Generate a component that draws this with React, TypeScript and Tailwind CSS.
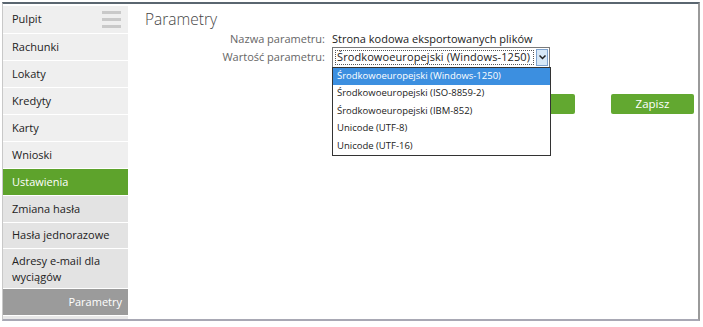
import React from "react";

const items = ["Rachunki", "Lokaty", "Kredyty", "Karty", "Wnioski"];

export default function App() {
  return (
    <div className="w-[703px] h-[327px] bg-white" style={{ fontFamily: '"Open Sans", "Noto Sans", sans-serif' }}>
      <div className="ml-[2px] mt-[2px] w-[698px] h-[319px] border-t-[2px] border-t-[#5a6670] border-l border-l-[#c8c8c8] border-r-[2px] border-r-[#9a9a9a] border-b-[2px] border-b-[#a8a8b4] flex">
        <div className="w-[125px] flex flex-col bg-white gap-px pt-[2px]">
          <div className="h-[27px] bg-[#efefef] flex items-center justify-between pl-[9px] pr-[7px] text-[11px] text-[#222]">
            <span>Pulpit</span>
            <div className="flex flex-col gap-[4px] w-[19px]">
              <div className="h-[3px] bg-[#c9c9c9]" />
              <div className="h-[3px] bg-[#c9c9c9]" />
              <div className="h-[3px] bg-[#c9c9c9]" />
            </div>
          </div>
          {items.map((t) => (
            <div key={t} className="h-[26px] bg-[#efefef] flex items-center pl-[9px] text-[11px] text-[#222]">{t}</div>
          ))}
          <div className="h-[26px] bg-[#5ea32c] flex items-center pl-[9px] text-[11px] text-white">Ustawienia</div>
          <div className="h-[26px] bg-[#e3e3e3] flex items-center pl-[9px] text-[11px] text-[#222]">Zmiana hasła</div>
          <div className="h-[25px] bg-[#e3e3e3] flex items-center pl-[9px] text-[11px] text-[#222]">Hasła jednorazowe</div>
          <div className="h-[39px] bg-[#e3e3e3] flex items-center pl-[9px] text-[11px] leading-[16px] text-[#222]">Adresy e-mail dla<br />wyciągów</div>
          <div className="h-[26px] bg-[#9b9b9b] flex items-center justify-end pr-[6px] text-[11px] text-white">Parametry</div>
          <div className="flex-1 bg-[#e8e8e8]" />
        </div>
        <div className="flex-1 relative pl-[15px]">
          <div className="text-[15.5px] font-light text-[#444] leading-[20px] mt-[5px] ml-[2px]">Parametry</div>
          <div className="flex items-center mt-[2px] text-[11px] h-[16px]">
            <div className="w-[189px] text-right pr-[7px] text-[#666]">Nazwa parametru:</div>
            <div className="text-[#222]">Strona kodowa eksportowanych plików</div>
          </div>
          <div className="flex items-start mt-[0px] text-[11px]">
            <div className="w-[189px] text-right pr-[7px] text-[#666] pt-[2px]">Wartość parametru:</div>
            <div className="relative">
              <div className="w-[218px] h-[21px] border border-[#7a7a7a] bg-white flex items-center">
                <div className="ml-[2px] border border-dotted border-[#555] h-[15px] flex items-center px-[1px] text-[11px] tracking-[0.1px] whitespace-nowrap text-[#222] w-[199px]">Środkowoeuropejski (Windows-1250)</div>
                <div className="ml-auto mr-[1px] w-[12px] h-[17px] bg-[#d7e8f7] border border-[#7da2ce] flex items-center justify-center">
                  <svg width="7" height="5" viewBox="0 0 7 5"><path d="M0.5 0.5 L3.5 3.5 L6.5 0.5" stroke="#222" strokeWidth="1.5" fill="none" /></svg>
                </div>
              </div>
              <div className="absolute left-0 top-[20px] w-[219px] border border-[#333] bg-white z-10 text-[9.5px] whitespace-nowrap text-[#222]">
                <div className="h-[17px] bg-[#3c8fe0] text-white flex items-center pl-[4px]">Środkowoeuropejski (Windows-1250)</div>
                <div className="h-[17px] flex items-center pl-[4px]">Środkowoeuropejski (ISO-8859-2)</div>
                <div className="h-[18px] flex items-center pl-[4px]">Środkowoeuropejski (IBM-852)</div>
                <div className="h-[17px] flex items-center pl-[4px]">Unicode (UTF-8)</div>
                <div className="h-[18px] flex items-center pl-[4px]">Unicode (UTF-16)</div>
              </div>
            </div>
          </div>
          <div className="flex justify-end gap-[36px] mt-[26px] pr-[4px]">
            <div className="w-[83px] h-[20px] bg-[#62a830] rounded-[2px] text-white text-[11.5px] flex items-center justify-center">Anuluj</div>
            <div className="w-[83px] h-[20px] bg-[#62a830] rounded-[2px] text-white text-[11.5px] flex items-center justify-center">Zapisz</div>
          </div>
        </div>
      </div>
    </div>
  );
}
